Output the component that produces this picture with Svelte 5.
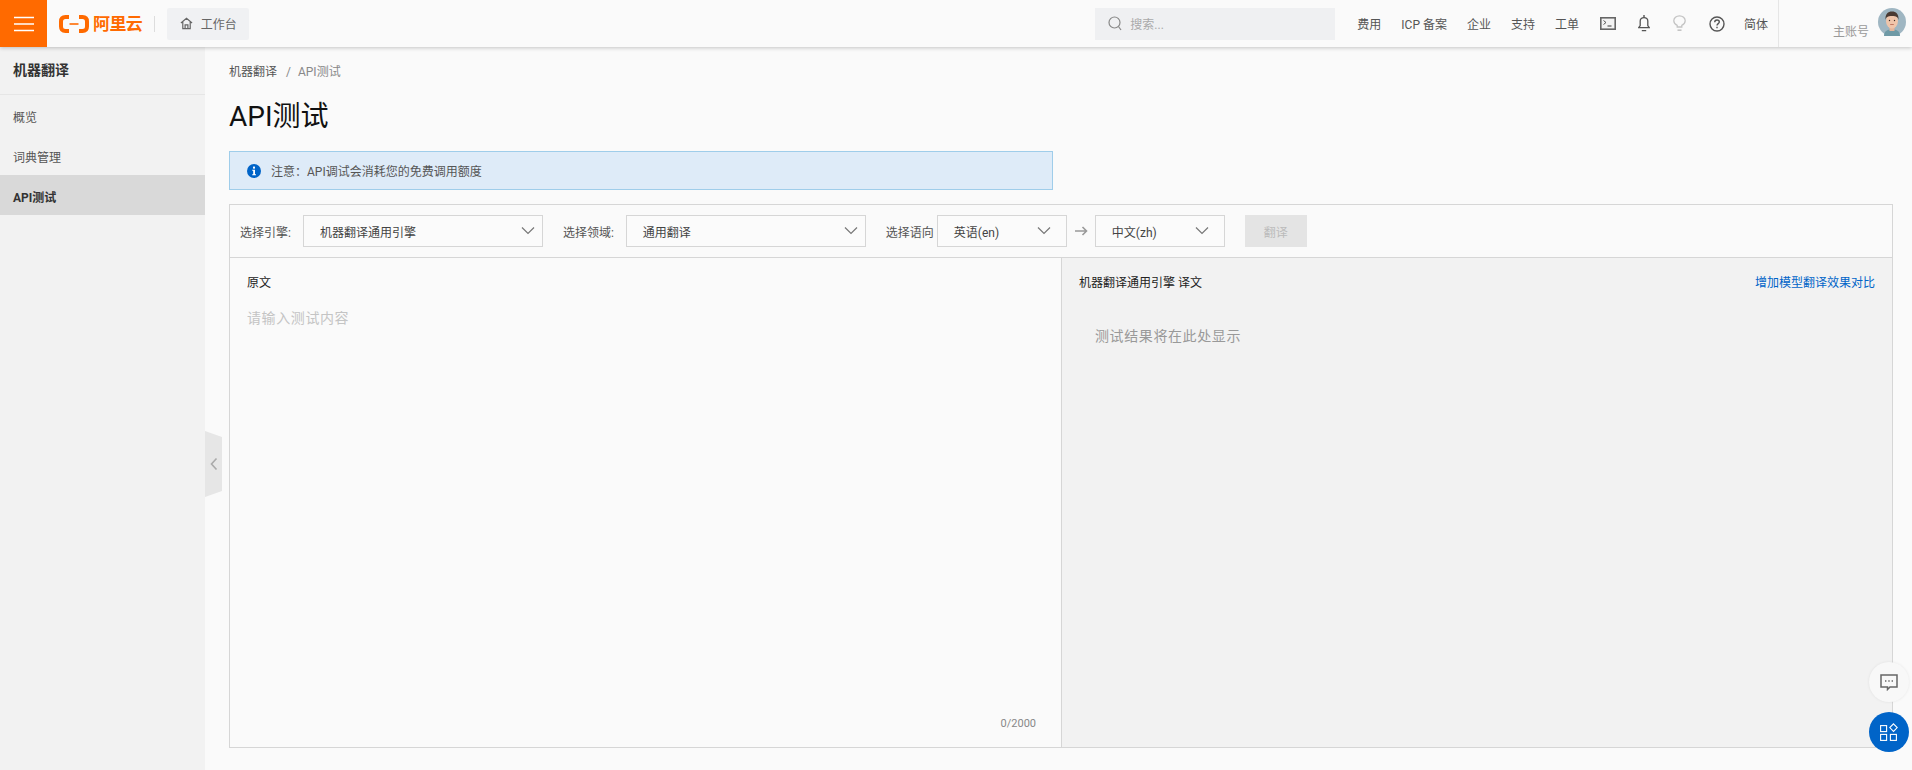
<script lang="ts">
  const topLinks = ['费用', 'ICP 备案', '企业', '支持', '工单'];
  const sideItems = [
    { label: '概览', active: false },
    { label: '词典管理', active: false },
    { label: 'API测试', active: true }
  ];
  let source = $state('');
</script>

{#snippet chevron()}
  <svg class="chevron" width="16" height="10" viewBox="0 0 16 10" fill="none" aria-hidden="true">
    <path d="M2 1.5L8 7.5L14 1.5" stroke="#777" stroke-width="1.2"/>
  </svg>
{/snippet}

<div class="page">
  <!-- Top bar -->
  <header class="topbar">
    <button class="menu-btn" aria-label="菜单">
      <svg width="20" height="16" viewBox="0 0 20 16" fill="none" aria-hidden="true">
        <path d="M0 1.5H20M0 8H20M0 14.5H20" stroke="#fff" stroke-width="1.6"/>
      </svg>
    </button>
    <div class="logo">
      <svg width="30" height="18" viewBox="0 0 30 18" fill="none" aria-hidden="true">
        <path d="M10 2H6.5Q2 2 2 6.5V11.5Q2 16 6.5 16H10M20 2H23.5Q28 2 28 6.5V11.5Q28 16 23.5 16H20" stroke="#ff6a00" stroke-width="4"/>
        <path d="M10.5 9H19.5" stroke="#ff6a00" stroke-width="1.6"/>
      </svg>
      <span class="logo-text">阿里云</span>
    </div>
    <span class="logo-sep"></span>
    <div class="workbench">
      <svg width="13" height="13" viewBox="0 0 14 14" fill="none" aria-hidden="true">
        <path d="M1 6.5L7 1.5L13 6.5M3 5.5V12.5H11V5.5M5.5 12.5V8.5H8.5V12.5" stroke="#666" stroke-width="1.3"/>
      </svg>
      <span>工作台</span>
    </div>

    <div class="search">
      <svg width="14" height="15" viewBox="0 0 14 15" fill="none" aria-hidden="true">
        <circle cx="6.5" cy="6.5" r="5.5" stroke="#888" stroke-width="1.2"/>
        <path d="M10.5 10.5L13 14" stroke="#888" stroke-width="1.2"/>
      </svg>
      <span>搜索...</span>
    </div>

    <nav class="toplinks">
      {#each topLinks as link}
        <span>{link}</span>
      {/each}
    </nav>

    <div class="topicons">
      <svg class="ic-term" width="16" height="13" viewBox="0 0 16 13" fill="none" aria-hidden="true">
        <rect x="0.8" y="0.8" width="14.4" height="11.4" fill="#f3f3f3" stroke="#666" stroke-width="1.6"/>
        <path d="M3.5 3.5L6 5.5L3.5 7.5" stroke="#555" stroke-width="1"/>
        <path d="M7.5 9H11.5" stroke="#555" stroke-width="1.2"/>
      </svg>
      <svg class="ic-bell" width="12" height="17" viewBox="0 0 12 17" fill="none" aria-hidden="true">
        <path d="M0.8 12.6H11.2L9.8 10.6V6C9.8 4 8.2 2.6 6 2.6C3.8 2.6 2.2 4 2.2 6V10.6L0.8 12.6Z" stroke="#555" stroke-width="1.3"/>
        <path d="M3.8 15.6H8.2M6 0V2.6" stroke="#555" stroke-width="1.4"/>
      </svg>
      <svg class="ic-bulb" width="13" height="17" viewBox="0 0 13 17" fill="none" aria-hidden="true">
        <path d="M4.2 12V10.4C2.2 9.4 0.8 7.8 0.8 5.8C0.8 3 3.2 0.8 6.5 0.8C9.8 0.8 12.2 3 12.2 5.8C12.2 7.8 10.8 9.4 8.8 10.4V12H4.2Z" stroke="#c4c4c4" stroke-width="1.3"/>
        <path d="M4.5 15.2H8.5" stroke="#c4c4c4" stroke-width="1.6"/>
      </svg>
      <svg class="ic-help" width="16" height="16" viewBox="0 0 16 16" fill="none" aria-hidden="true">
        <circle cx="8" cy="8" r="7" stroke="#555" stroke-width="1.4"/>
        <path d="M5.7 6.2C5.7 4.9 6.7 4 8 4C9.3 4 10.3 4.9 10.3 6C10.3 7.6 8 7.6 8 9.4" stroke="#555" stroke-width="1.4"/>
        <path d="M8 10.7V12.2" stroke="#555" stroke-width="1.4"/>
      </svg>
    </div>

    <span class="lang">简体</span>

    <div class="account">
      <span class="account-name">主账号</span>
      <svg class="avatar" width="28" height="28" viewBox="0 0 28 28" aria-hidden="true">
        <circle cx="14" cy="14" r="14" fill="#9fb6c2"/>
        <path d="M6 28C6 23 9 21.5 14 21.5C19 21.5 22 23 22 28Z" fill="#6f9aa6"/>
        <rect x="11.5" y="17" width="5" height="6" fill="#e4b59b"/>
        <ellipse cx="14" cy="13" rx="6" ry="7.5" fill="#f0c5aa"/>
        <path d="M7.5 12C7 6 10 3.5 14 3.5C18 3.5 21 6 20.5 12C20 9 18.5 8 14 8C9.5 8 8 9 7.5 12Z" fill="#4a3a32"/>
        <circle cx="11.5" cy="12.5" r="0.7" fill="#3a2a22"/>
        <circle cx="16.5" cy="12.5" r="0.7" fill="#3a2a22"/>
        <path d="M12.2 16.5H15.8" stroke="#b5654f" stroke-width="0.8"/>
      </svg>
    </div>
  </header>

  <div class="layout">
    <!-- Sidebar -->
    <aside class="sidebar">
      <div class="side-title">机器翻译</div>
      {#each sideItems as item}
        <div class="side-item" class:active={item.active}>{item.label}</div>
      {/each}
    </aside>

    <div class="collapse" aria-hidden="true">
      <svg width="8" height="14" viewBox="0 0 8 14" fill="none">
        <path d="M6.5 1.5L1.5 7L6.5 12.5" stroke="#aaa" stroke-width="1.6"/>
      </svg>
    </div>

    <!-- Main -->
    <main class="main">
      <div class="breadcrumb">
        <span class="crumb">机器翻译</span>
        <span class="crumb-sep">/</span>
        <span class="crumb-current">API测试</span>
      </div>
      <h1 class="title">API测试</h1>

      <div class="alert">
        <svg width="14" height="14" viewBox="0 0 14 14" aria-hidden="true">
          <circle cx="7" cy="7" r="7" fill="#0064c8"/>
          <rect x="6" y="2.6" width="2" height="2" fill="#fff"/>
          <path d="M5.2 5.8H8V10.2H9V11.2H5.2V10.2H6.2V6.8H5.2Z" fill="#fff"/>
        </svg>
        <span>注意&#xFF1A;API调试会消耗您的免费调用额度</span>
      </div>

      <section class="panel">
        <div class="toolbar">
          <span class="tool-label">选择引擎:</span>
          <div class="select engine">机器翻译通用引擎{@render chevron()}</div>
          <span class="tool-label second">选择领域:</span>
          <div class="select engine">通用翻译{@render chevron()}</div>
          <span class="tool-label third">选择语向</span>
          <div class="select lang-select">英语(en){@render chevron()}</div>
          <svg class="arrow" width="14" height="10" viewBox="0 0 14 10" fill="none" aria-hidden="true">
            <path d="M1 5H12.5M8.5 1L12.5 5L8.5 9" stroke="#999" stroke-width="1.6"/>
          </svg>
          <div class="select lang-select">中文(zh){@render chevron()}</div>
          <button class="translate" disabled>翻译</button>
        </div>

        <div class="panes">
          <div class="pane source">
            <div class="pane-label">原文</div>
            <textarea bind:value={source} placeholder="请输入测试内容"></textarea>
            <div class="counter">{source.length}/2000</div>
          </div>
          <div class="pane target">
            <div class="target-head">
              <span class="pane-label">机器翻译通用引擎 译文</span>
              <span class="compare">增加模型翻译效果对比</span>
            </div>
            <p class="result">测试结果将在此处显示</p>
          </div>
        </div>
      </section>
    </main>
  </div>

  <!-- Floating buttons -->
  <div class="float-btns">
    <button class="fab fab-light" aria-label="反馈">
      <svg width="18" height="17" viewBox="0 0 18 17" fill="none" aria-hidden="true">
        <path d="M1 1H17V13H10L7.5 15.5V13H1Z" stroke="#666" stroke-width="1.5"/>
        <path d="M5 7H6.4M8.3 7H9.7M11.6 7H13" stroke="#666" stroke-width="1.5"/>
      </svg>
    </button>
    <button class="fab fab-blue" aria-label="应用">
      <svg width="18" height="18" viewBox="0 0 18 18" fill="none" aria-hidden="true">
        <rect x="0.6" y="2.6" width="6" height="6" stroke="#fff" stroke-width="1.1"/>
        <rect x="0.6" y="11.4" width="6" height="6" stroke="#fff" stroke-width="1.1"/>
        <rect x="10.4" y="11.4" width="6" height="6" stroke="#fff" stroke-width="1.1"/>
        <path d="M13.5 0.8L17.2 4.6L13.5 8.4L9.8 4.6Z" stroke="#fff" stroke-width="1.1"/>
      </svg>
    </button>
  </div>
</div>

<style>
  :global(body) {
    background: #fafafa;
    font-family: Roboto, "Noto Sans CJK SC", sans-serif;
    font-size: 12px;
    color: #333;
  }

  .page {
    height: 770px;
    display: flex;
    flex-direction: column;
    overflow: hidden;
    position: relative;
  }

  /* ---- Top bar ---- */
  .topbar {
    height: 47px;
    flex-shrink: 0;
    display: flex;
    align-items: center;
    background: #fafafa;
    box-shadow: 0 1px 4px rgba(0, 0, 0, 0.22);
    position: relative;
    z-index: 2;
  }

  .menu-btn {
    width: 47px;
    height: 47px;
    background: #ff6a00;
    border: none;
    padding: 0;
    display: flex;
    align-items: center;
    justify-content: center;
    flex-shrink: 0;
  }

  .logo {
    margin-left: 12px;
    display: flex;
    align-items: center;
    gap: 4px;
  }

  .logo-text {
    font-size: 17px;
    font-weight: 700;
    letter-spacing: -0.6px;
    color: #ff6a00;
    line-height: 20px;
  }

  .logo-sep {
    width: 1px;
    height: 16px;
    background: #ddd;
    margin-left: 12px;
  }

  .workbench {
    margin-left: 12px;
    width: 82px;
    height: 32px;
    background: #f0f1f3;
    border-radius: 2px;
    display: flex;
    align-items: center;
    justify-content: center;
    gap: 8px;
    color: #666;
  }

  .search {
    margin-left: auto;
    width: 240px;
    height: 32px;
    box-sizing: border-box;
    padding-left: 13px;
    background: #eff0f2;
    display: flex;
    align-items: center;
    gap: 8px;
    color: #aaa;
  }

  .toplinks {
    display: flex;
    gap: 20px;
    margin-left: 22px;
    color: #555;
  }

  .topicons {
    display: flex;
    align-items: center;
    gap: 22px;
    margin-left: 21px;
  }

  .ic-bell {
    margin-right: 1px;
  }

  .ic-help {
    margin-left: 1px;
  }

  .lang {
    margin-left: 19px;
    color: #555;
  }

  .account {
    margin-left: 10px;
    width: 134px;
    height: 47px;
    box-sizing: border-box;
    border-left: 1px solid #e6e6e6;
    padding-left: 54px;
    display: flex;
    gap: 9px;
    color: #999;
  }

  .account-name {
    margin-top: 24px;
    line-height: 16px;
  }

  .avatar {
    margin-top: 8px;
  }

  /* ---- Layout ---- */
  .layout {
    flex: 1;
    min-height: 0;
    display: flex;
    position: relative;
  }

  /* ---- Sidebar ---- */
  .sidebar {
    width: 205px;
    flex-shrink: 0;
    background: #f2f2f2;
  }

  .side-title {
    height: 48px;
    box-sizing: border-box;
    border-bottom: 1px solid #e6e6e6;
    padding-left: 13px;
    line-height: 47px;
    font-size: 14px;
    font-weight: 700;
    color: #333;
  }

  .side-item {
    height: 40px;
    line-height: 46px;
    padding-left: 13px;
    color: #555;
  }

  .side-item.active {
    background: #d9d9d9;
    font-weight: 700;
    color: #333;
  }

  .collapse {
    position: absolute;
    left: 205px;
    top: 384px;
    width: 17px;
    height: 66px;
    background: #e6e6e6;
    clip-path: polygon(0 0, 100% 9%, 100% 91%, 0 100%);
    display: flex;
    align-items: center;
    justify-content: center;
  }

  /* ---- Main ---- */
  .main {
    flex: 1;
    min-width: 0;
    padding: 0 19px 0 24px;
    display: flex;
    flex-direction: column;
  }

  .breadcrumb {
    margin-top: 17px;
    line-height: 16px;
    display: flex;
    gap: 9px;
  }

  .crumb {
    color: #555;
  }

  .crumb-sep,
  .crumb-current {
    color: #888;
  }

  .crumb-current {
    margin-left: -2px;
  }

  .title {
    margin: 18px 0 0;
    font-size: 28px;
    font-weight: 400;
    line-height: 38px;
    color: #111;
  }

  .alert {
    margin-top: 15px;
    width: 824px;
    height: 39px;
    box-sizing: border-box;
    background: #deebf8;
    border: 1px solid #9fcdea;
    padding-left: 17px;
    display: flex;
    align-items: center;
    gap: 10px;
    color: #555;
  }

  /* ---- Panel ---- */
  .panel {
    margin-top: 14px;
    height: 544px;
    box-sizing: border-box;
    border: 1px solid #d6d6d6;
    display: flex;
    flex-direction: column;
  }

  .toolbar {
    height: 53px;
    flex-shrink: 0;
    box-sizing: border-box;
    border-bottom: 1px solid #d6d6d6;
    padding-left: 10px;
    display: flex;
    align-items: center;
    color: #555;
  }

  .tool-label {
    margin-right: 12px;
  }

  .tool-label.second {
    margin-left: 20px;
  }

  .tool-label.third {
    margin-left: 20px;
    margin-right: 3px;
  }

  .select {
    height: 32px;
    box-sizing: border-box;
    border: 1px solid #d6d6d6;
    background: #fbfbfb;
    padding-left: 16px;
    display: flex;
    align-items: center;
    position: relative;
    color: #444;
  }

  .engine {
    width: 240px;
  }

  .lang-select {
    width: 130px;
  }

  .chevron {
    position: absolute;
    right: 6px;
    top: 10px;
  }

  .lang-select .chevron {
    right: 14px;
  }

  .arrow {
    margin: 0 7px;
  }

  .translate {
    margin-left: 20px;
    width: 62px;
    height: 32px;
    border: none;
    background: #e4e4e4;
    color: #bbb;
    font: inherit;
  }

  /* ---- Panes ---- */
  .panes {
    flex: 1;
    min-height: 0;
    display: grid;
    grid-template-columns: 832px 1fr;
  }

  .pane {
    min-height: 0;
    display: flex;
    flex-direction: column;
  }

  .source {
    padding: 17px 17px 15px;
    border-right: 1px solid #d6d6d6;
  }

  .pane-label {
    line-height: 16px;
    color: #222;
  }

  textarea {
    flex: 1;
    margin: 17px 0 0;
    padding: 0;
    border: none;
    outline: none;
    resize: none;
    background: transparent;
    font: inherit;
    font-size: 14px;
    letter-spacing: 0.6px;
    line-height: 20px;
    color: #333;
  }

  textarea::placeholder {
    color: #c4c4c4;
    opacity: 1;
  }

  .counter {
    align-self: flex-end;
    margin-right: 8px;
    font-size: 11px;
    line-height: 16px;
    color: #888;
  }

  .target {
    background: #f2f2f2;
    padding: 17px 17px 0;
  }

  .target-head {
    display: flex;
    justify-content: space-between;
  }

  .compare {
    line-height: 16px;
    color: #0064c8;
  }

  .result {
    margin: 35px 0 0 16px;
    font-size: 14px;
    letter-spacing: 0.6px;
    line-height: 20px;
    color: #999;
  }

  /* ---- Floating ---- */
  .float-btns {
    position: absolute;
    right: 3px;
    top: 662px;
    display: flex;
    flex-direction: column;
    gap: 10px;
    z-index: 3;
  }

  .fab {
    width: 40px;
    height: 40px;
    border: none;
    border-radius: 50%;
    padding: 0;
    display: flex;
    align-items: center;
    justify-content: center;
  }

  .fab-light {
    background: #f8f8f8;
    box-shadow: 0 0 3px rgba(0, 0, 0, 0.08);
  }

  .fab-blue {
    background: #0064c8;
  }
</style>
